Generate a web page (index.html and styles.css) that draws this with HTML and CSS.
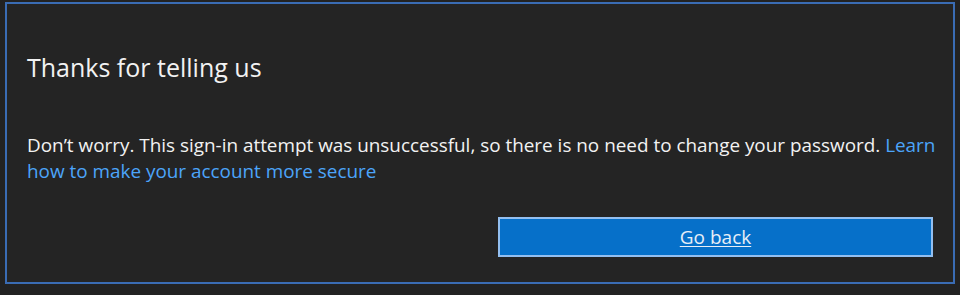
FILE: index.html
```html
<!DOCTYPE html>
<html lang="en">
<head>
<meta charset="utf-8">
<title>Thanks for telling us</title>
<link rel="stylesheet" href="styles.css">
</head>
<body>
<div class="frame">
  <h1 class="title">Thanks for telling us</h1>
  <p class="message">Don’t worry. This sign-in attempt was unsuccessful, so there is no need to change your password. <a class="link" href="#">Learn how to make your account more secure</a></p>
  <div class="actions">
    <a class="button" href="#">Go back</a>
  </div>
</div>
</body>
</html>
```
FILE: styles.css
```css
html, body {
  margin: 0;
  padding: 0;
  background: #222222;
}
body {
  padding: 2px 5px 0 5px;
  font-family: "Open Sans", "Noto Sans", sans-serif;
  color: #ffffff;
}
.frame {
  box-sizing: border-box;
  width: 950px;
  height: 282px;
  border: 2px solid #3a6cb4;
  background: #242424;
  padding: 0 10px 0 20px;
  display: flex;
  flex-direction: column;
}
.title {
  margin: 48px 0 0 0;
  font-size: 25px;
  font-weight: 400;
  line-height: 30px;
  color: #f2f2f2;
}
.message {
  margin: 50px 0 0 0;
  font-size: 18.9px;
  line-height: 26px;
  color: #f2f2f2;
}
.link {
  color: #4ca4fa;
  text-decoration: none;
}
.actions {
  display: flex;
  justify-content: flex-end;
  margin: 33px 10px 0 0;
}
.button {
  box-sizing: border-box;
  width: 435px;
  height: 40px;
  border: 2px solid #93bff0;
  background: #0670c9;
  color: #e6eef7;
  font-size: 19px;
  display: flex;
  align-items: center;
  justify-content: center;
  text-decoration: underline;
  text-underline-offset: 2px;
}
```
